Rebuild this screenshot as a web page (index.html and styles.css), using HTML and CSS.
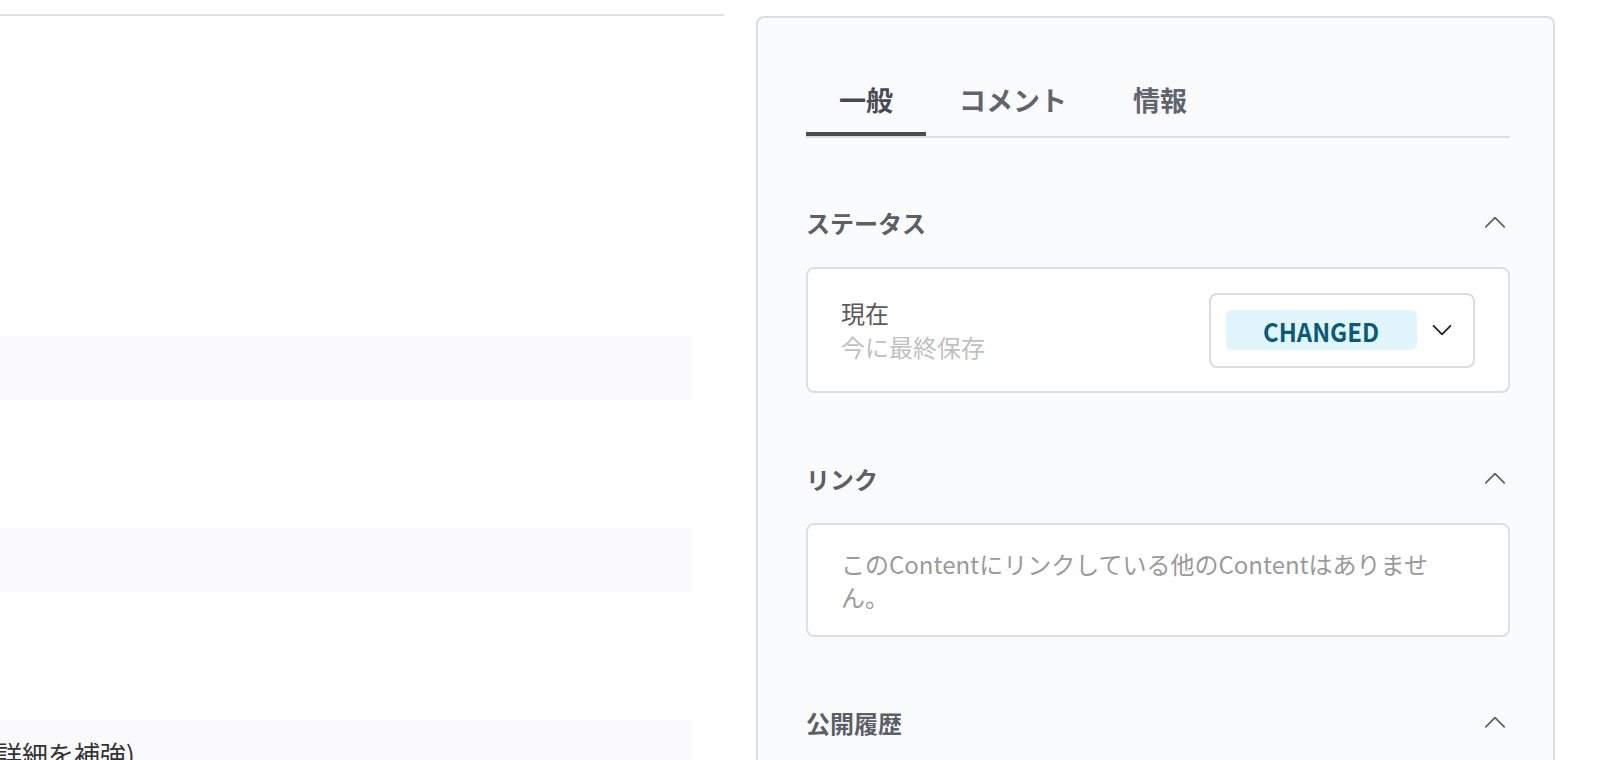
FILE: index.html
```html
<!DOCTYPE html>
<html lang="ja">
<head>
<meta charset="utf-8">
<title>Content</title>
<link rel="stylesheet" href="styles.css">
</head>
<body>
<div class="page">
  <main class="main">
    <div class="rows">
      <div class="row"></div>
      <div class="row"></div>
      <div class="row"></div>
      <div class="row"></div>
      <div class="row"></div>
      <div class="row row-striped"></div>
      <div class="row"></div>
      <div class="row"></div>
      <div class="row row-striped"></div>
      <div class="row"></div>
      <div class="row"></div>
      <div class="row row-striped"><span class="cell-text">詳細を補強)</span></div>
    </div>
  </main>

  <aside class="panel">
    <nav class="tabs">
      <div class="tab tab-active">一般</div>
      <div class="tab">コメント</div>
      <div class="tab">情報</div>
    </nav>

    <section class="section">
      <header class="section-head">
        <h3 class="section-title">ステータス</h3>
        <svg class="chev-up" width="24" height="24" viewBox="0 0 24 24"><polyline points="2.8,16.8 12,7.6 21.2,16.8" fill="none" stroke="#5a5e66" stroke-width="1.7" stroke-linecap="round" stroke-linejoin="round"/></svg>
      </header>
      <div class="card status-card">
        <div class="status-info">
          <div class="status-label">現在</div>
          <div class="status-sub">今に最終保存</div>
        </div>
        <div class="select">
          <span class="badge"><span class="badge-text">CHANGED</span></span>
          <svg class="chev-down" width="24" height="24" viewBox="0 0 24 24"><polyline points="3.6,7.8 12,16.4 20.4,7.8" fill="none" stroke="#222" stroke-width="1.8" stroke-linecap="round" stroke-linejoin="round"/></svg>
        </div>
      </div>
    </section>

    <section class="section">
      <header class="section-head">
        <h3 class="section-title">リンク</h3>
        <svg class="chev-up" width="24" height="24" viewBox="0 0 24 24"><polyline points="2.8,16.8 12,7.6 21.2,16.8" fill="none" stroke="#5a5e66" stroke-width="1.7" stroke-linecap="round" stroke-linejoin="round"/></svg>
      </header>
      <div class="card links-card">
        <p class="links-empty">このContentにリンクしている他のContentはありません。</p>
      </div>
    </section>

    <section class="section">
      <header class="section-head">
        <h3 class="section-title">公開履歴</h3>
        <svg class="chev-up" width="24" height="24" viewBox="0 0 24 24"><polyline points="2.8,16.8 12,7.6 21.2,16.8" fill="none" stroke="#5a5e66" stroke-width="1.7" stroke-linecap="round" stroke-linejoin="round"/></svg>
      </header>
      <div class="card history-card"></div>
    </section>
  </aside>
</div>
</body>
</html>
```

FILE: styles.css
```css
* {
  box-sizing: border-box;
}

html, body {
  margin: 0;
  padding: 0;
  background: #ffffff;
  height: 760px;
  overflow: hidden;
}

body {
  font-family: "Noto Sans CJK JP", "Noto Sans", sans-serif;
  color: #333;
}

.page {
  display: flex;
  align-items: flex-start;
}

/* left content area */
.main {
  width: 724px;
  flex: none;
  margin-top: 14px;
  border-top: 2px solid #e1e1e3;
}

.rows {
  width: 692px;
  display: flex;
  flex-direction: column;
}

.row {
  height: 64px;
  display: flex;
  align-items: center;
  overflow: hidden;
}

.row-striped {
  background: #fafafc;
}

.cell-text {
  font-size: 26px;
  color: #333;
  margin-left: -4px;
  margin-top: 2px;
  white-space: nowrap;
}

/* right panel */
.panel {
  flex: none;
  width: 799px;
  min-height: 900px;
  margin-left: 32px;
  margin-top: 16px;
  border: 2px solid #dedede;
  border-radius: 8px;
  background: #fafbfd;
  padding: 62px 43px 0 48px;
}

.tabs {
  display: flex;
  border-bottom: 2px solid #dcdde1;
}

.tab {
  padding: 0 33px 12px;
  line-height: 40px;
  font-size: 27px;
  font-weight: 700;
  color: #60646e;
  border-bottom: 4px solid transparent;
}

.tab-active {
  color: #474a53;
  border-bottom-color: #4a4d57;
}

.section {
  margin-top: 67px;
}

.section + .section {
  margin-top: 68px;
}

.section-head {
  display: flex;
  align-items: center;
  justify-content: space-between;
  height: 36px;
}

.section-title {
  margin: 0;
  font-size: 24px;
  line-height: 36px;
  font-weight: 700;
  color: #5b5f68;
}

.chev-up {
  display: block;
  margin-right: 3px;
  margin-top: -2px;
}

.card {
  margin-top: 26px;
  background: #ffffff;
  border: 2px solid #dfdfe1;
  border-radius: 8px;
}

.status-card {
  height: 126px;
  display: flex;
  align-items: center;
  justify-content: space-between;
  padding: 0 33px;
}

.status-info {
  display: flex;
  flex-direction: column;
  margin-top: -1px;
}

.status-label {
  font-size: 24px;
  line-height: 34px;
  color: #5a5a5a;
}

.status-sub {
  font-size: 24px;
  line-height: 34px;
  color: #c0c0c0;
}

.select {
  width: 266px;
  height: 75px;
  display: flex;
  align-items: center;
  gap: 13px;
  padding: 0 19px 0 15px;
  border: 2px solid #dcdcdc;
  border-radius: 8px;
  background: #fff;
}

.badge {
  width: 191px;
  height: 40px;
  display: flex;
  align-items: center;
  justify-content: center;
  background: #e1f6fc;
  border-radius: 6px;
  color: #0b5a7a;
  font-size: 26px;
  font-weight: 700;
}

.badge-text {
  display: inline-block;
  transform: scaleX(0.92);
}

.chev-down {
  display: block;
  flex: none;
}

.links-card {
  padding: 22px 60px 22px 33px;
}

.links-empty {
  margin: 0;
  font-size: 24px;
  line-height: 33px;
  color: #9a9a9a;
}

.history-card {
  height: 120px;
}
```
